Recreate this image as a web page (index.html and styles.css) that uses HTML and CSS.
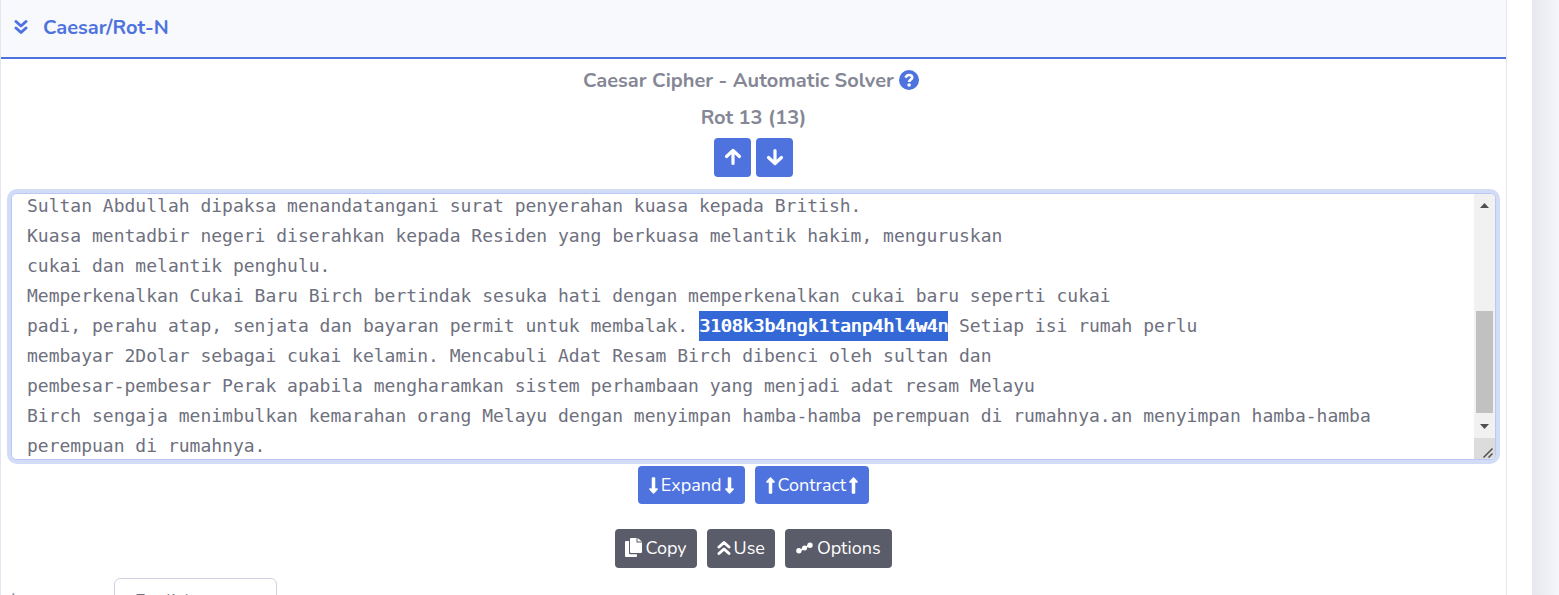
FILE: index.html
```html
<!DOCTYPE html>
<html lang="en">
<head>
<meta charset="utf-8">
<title>Caesar/Rot-N</title>
<link rel="stylesheet" href="styles.css">
</head>
<body>
<svg class="sprite" aria-hidden="true">
  <symbol id="chevrons" viewBox="0 0 14 16"><path d="M2 2.500l5 4.500 5-4.500M2 9l5 4.500 5-4.500" fill="none" stroke="currentColor" stroke-width="3" stroke-linecap="round" stroke-linejoin="round"/></symbol>
  <symbol id="arrow" viewBox="0 0 18 18"><path d="M9 15.500V3M2.500 8.500L9 2.500 15.500 8.500" fill="none" stroke="currentColor" stroke-width="3.200" stroke-linecap="round" stroke-linejoin="round"/></symbol>
  <symbol id="long-arrow" viewBox="0 0 9 17"><path d="M3 16V5.500H1Q0 5.500.5 4.500L3.900.7Q4.500.2 5.100.7L8.500 4.500Q9 5.500 8 5.500H6V16Q6 16.500 5.500 16.500H3.500Q3 16.500 3 16Z" fill="currentColor" stroke="currentColor" stroke-width=".5"/></symbol>
</svg>
<div class="shell">
  <main class="content">
    <section class="card">
      <header class="card-header">
        <svg class="header-icon"><use href="#chevrons"/></svg>
        <h1 class="title">Caesar/Rot-N</h1>
      </header>
      <div class="card-body">
        <h2 class="heading heading-help">Caesar Cipher - Automatic Solver
          <a class="help" href="#help" aria-label="Help"><svg viewBox="0 0 20 20"><circle cx="10" cy="10" r="10" fill="currentColor"/><path d="M6.500 7.600C7.500 5.600 8.700 5 10 5c1.800 0 3.200 1 3.200 2.500 0 2.200-3.100 2.100-3.100 4.500" fill="none" stroke="#fff" stroke-width="2.700"/><circle cx="10.100" cy="15" r="1.800" fill="#fff"/></svg></a>
        </h2>
        <h2 class="heading">Rot 13 (13)</h2>
        <div class="arrows">
          <button class="btn btn-square" type="button" aria-label="Previous rotation"><svg class="arrow-icon"><use href="#arrow"/></svg></button>
          <button class="btn btn-square" type="button" aria-label="Next rotation"><svg class="arrow-icon flip"><use href="#arrow"/></svg></button>
        </div>
        <div class="editor">
          <textarea class="output" id="output" rows="9" spellcheck="false" aria-label="Output">








Sultan Abdullah dipaksa menandatangani surat penyerahan kuasa kepada British.
Kuasa mentadbir negeri diserahkan kepada Residen yang berkuasa melantik hakim, menguruskan
cukai dan melantik penghulu.
Memperkenalkan Cukai Baru Birch bertindak sesuka hati dengan memperkenalkan cukai baru seperti cukai
padi, perahu atap, senjata dan bayaran permit untuk membalak. 3108k3b4ngk1tanp4hl4w4n Setiap isi rumah perlu
membayar 2Dolar sebagai cukai kelamin. Mencabuli Adat Resam Birch dibenci oleh sultan dan
pembesar-pembesar Perak apabila mengharamkan sistem perhambaan yang menjadi adat resam Melayu
Birch sengaja menimbulkan kemarahan orang Melayu dengan menyimpan hamba-hamba perempuan di rumahnya.an menyimpan hamba-hamba perempuan di rumahnya.</textarea>
          <div class="scrollbar" aria-hidden="true">
            <svg class="scroll-arrow" viewBox="0 0 9 5"><path d="M0 5L4.500 0 9 5z" fill="currentColor"/></svg>
            <div class="track"><div class="thumb"></div></div>
            <svg class="scroll-arrow" viewBox="0 0 9 5"><path d="M0 0L4.500 5 9 0z" fill="currentColor"/></svg>
            <svg class="grip" viewBox="0 0 21 21"><path d="M9.500 19.500l9-9M14.500 19.500l4-4" stroke="currentColor" stroke-width="1.500"/></svg>
          </div>
        </div>
        <div class="row">
          <button class="btn" type="button"><svg class="long-icon flip"><use href="#long-arrow"/></svg>Expand<svg class="long-icon flip"><use href="#long-arrow"/></svg></button>
          <button class="btn" type="button"><svg class="long-icon"><use href="#long-arrow"/></svg>Contract<svg class="long-icon"><use href="#long-arrow"/></svg></button>
        </div>
        <div class="row row-actions">
          <button class="btn btn-dark" type="button"><svg class="copy-icon" viewBox="0 0 17 19"><path d="M6 0h5.500v4.500H17V14q0 1-1 1H6q-1 0-1-1V1q0-1 1-1zM12.500 0L17 3.500h-4.500zM1 3h3v12q0 1.200 1.200 1.200H12V18q0 1-1 1H1q-1 0-1-1V4q0-1 1-1z" fill="currentColor"/></svg>Copy</button>
          <button class="btn btn-dark" type="button"><svg class="use-icon flip"><use href="#chevrons"/></svg>Use</button>
          <button class="btn btn-dark btn-wide" type="button"><svg class="dots-icon" viewBox="0 0 17 12"><path d="M3 9l5.500-3L14 3" stroke="currentColor" stroke-width="1.500"/><g fill="currentColor"><circle cx="2.900" cy="8.700" r="2.700"/><circle cx="8.500" cy="6" r="2.500"/><circle cx="14" cy="3.200" r="2.700"/></g></svg>Options</button>
        </div>
        <div class="field">
          <label class="label" for="language">Language:</label>
          <select class="select" id="language"><option>English</option></select>
        </div>
      </div>
    </section>
  </main>
  <div class="gutter"></div>
</div>
<script src="script.js"></script>
</body>
</html>
```
FILE: styles.css
```css
* { box-sizing: border-box; }
body { margin: 0; overflow: hidden; height: 100vh; background: #f8f9fc; color: #858796; font-family: Nunito, "Noto Sans", sans-serif; font-size: 18px; }
.sprite { position: absolute; width: 0; height: 0; }
.shell { display: flex; min-height: 100vh; }
.content { flex: 1; padding-right: 25px; background: #fff; }
.gutter { width: 27px; background: linear-gradient(90deg, #e7e8ed, #f5f6fb); }
.card { min-height: 100%; border: 1px solid #e3e6f0; border-top: 0; }
.card-header { display: flex; align-items: center; gap: 15px; height: 59px; padding: 0 13px 2px; background: #f8f9fc; border-bottom: 2px solid #4e73df; color: #4e73df; }
.header-icon { width: 14px; height: 16px; margin-bottom: 2px; }
.title, .heading { margin: 0; font-size: 20px; font-weight: 700; line-height: 24px; }
.card-body { display: flex; flex-direction: column; padding: 10px 10px; }
.heading { display: flex; justify-content: center; align-items: center; gap: 5px; margin-bottom: 13px; }
.heading-help { padding-right: 5px; }
.help { display: flex; margin-bottom: 2px; color: #4e73df; }
.help svg { width: 20px; height: 20px; }
.arrows { display: flex; justify-content: center; gap: 5px; margin-bottom: 16px; margin-top: -5px; }
.btn { display: flex; align-items: center; justify-content: center; gap: 3px; height: 38px; padding: 0 11px; border: 0; border-radius: 4px; background: #4e73df; color: #fff; font: inherit; }
.btn-square { width: 37px; height: 39px; padding: 0 0 2px; }
.btn-dark { height: 39px; padding: 0 10px 2px; background: #5a5c69; }
.btn-wide { gap: 4px; padding: 0 11px 2px; }
.arrow-icon { width: 18px; height: 18px; }
.long-icon { width: 9px; height: 17px; }
.flip { transform: rotate(180deg); }
.copy-icon { width: 17px; height: 19px; }
.use-icon { width: 14px; height: 16px; }
.dots-icon { width: 17px; height: 12px; }
.editor { position: relative; height: 267px; border: 1px solid #bac8f3; border-radius: 6px; box-shadow: 0 0 0 4px #d2dcf7; background: #fff; overflow: hidden; }
.output { display: block; width: 100%; height: 100%; padding: 7px 36px 7px 15px; border: 0; outline: 0; background: #fff; color: #6e707e; font: 18px/30px Consolas, "DejaVu Sans Mono", monospace; resize: none; }
.output::selection { background: rgba(50, 103, 214, 0.996); color: #fff; text-shadow: 1px 0 #fff; }
.scrollbar { position: absolute; top: 0; right: 0; bottom: 0; display: flex; flex-direction: column; align-items: center; width: 21px; padding-top: 9px; background: #f1f1f1; color: #505050; }
.scroll-arrow { width: 9px; height: 5px; }
.track { display: flex; flex-direction: column; justify-content: flex-end; flex: 1; width: 17px; padding-bottom: 11px; }
.thumb { height: 50%; background: #c1c1c1; }
.grip { width: 21px; height: 21px; margin-top: 9px; background: #dcdcdc; }
.row { display: flex; justify-content: center; gap: 10px; margin-top: 6px; }
.row-actions { margin-top: 25px; }
.field { display: flex; align-items: center; gap: 16px; margin-top: 10px; }
.label { width: 87px; padding-bottom: 2px; }
.select { width: 163px; height: 45px; padding: 0 20px; appearance: none; border: 1px solid #d1d3e2; border-radius: 6px; background: #fff; color: #6e707e; font: inherit; }
```
FILE: script.js
```js
const output = document.getElementById('output');
const key = '3108k3b4ngk1tanp4hl4w4n';
const start = output.value.indexOf(key);
output.focus({ preventScroll: true });
output.setSelectionRange(start, start + key.length);
output.scrollTop = 250;
```
